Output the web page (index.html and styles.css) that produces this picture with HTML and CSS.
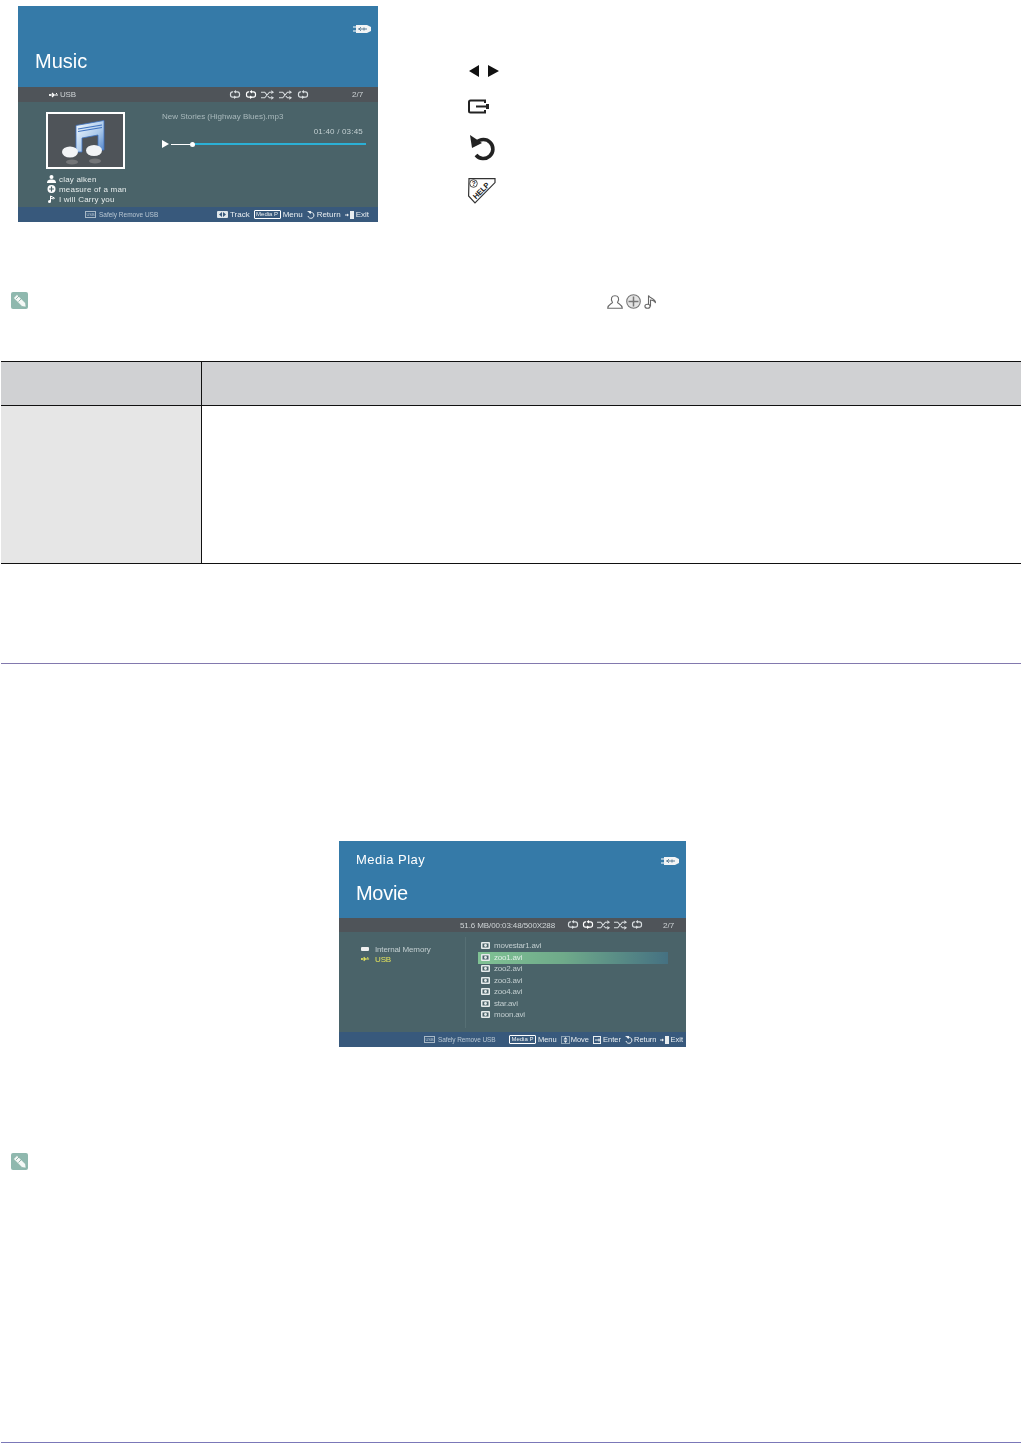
FILE: index.html
```html
<!DOCTYPE html>
<html lang="en">
<head>
<meta charset="utf-8">
<title>Media Play</title>
<link rel="stylesheet" href="styles.css">
</head>
<body>
<svg class="defs" width="0" height="0" aria-hidden="true">
  <symbol id="i-usb" viewBox="0 0 18 8"><path d="M0 1.500h3v1H0zM0 5.500h3v1H0z" fill="#fff"/><path d="M3 0h11l4 2v4l-4 2H3z" fill="#f2f4f5"/><path d="M5 4h9M8 2.200L6 4l2 1.800M11 2.500v3" stroke="#5d7f96" fill="none"/></symbol>
  <symbol id="i-usbsmall" viewBox="0 0 10 6"><path d="M0 3h9M3 1l2 2-2 2M7 1.500h1" stroke="currentColor" stroke-width="1.200" fill="none"/><circle cx="1" cy="3" r="1" fill="currentColor"/></symbol>
  <symbol id="i-repeat" viewBox="0 0 12 10"><path d="M4 1.800H3.500Q1.500 1.800 1.500 4v1q0 2.200 2 2.200h5q2 0 2-2.200V4q0-2.200-2-2.200H6" stroke="currentColor" stroke-width="1.200" fill="none"/><path d="M7 0v3.600L4.500 1.800zM5 5.500v3.600l2.500-1.800z" fill="currentColor"/></symbol>
  <symbol id="i-shuffle" viewBox="0 0 15 10"><path d="M0 2h4l5 6h2M0 8h4l5-6h2" stroke="currentColor" stroke-width="1.100" fill="none"/><path d="M11 0l3 2-3 2zM11 6l3 2-3 2z" fill="currentColor"/></symbol>
  <symbol id="i-file" viewBox="0 0 9 7"><rect width="9" height="7" rx="1" fill="#e6ecec"/><rect x="1.500" y="1.500" width="6" height="4" fill="#4a6369"/><circle cx="4.500" cy="3.500" r="1.400" fill="#e6ecec"/></symbol>
  <symbol id="i-note" viewBox="0 0 17 17"><rect width="17" height="17" rx="2" fill="#8fb8ae"/><path d="M2.500 6L6 2.500l8.500 8.500.5 4-4-.5z" fill="#f4f8f6" stroke="#7aa69b" stroke-width=".5"/><path d="M5 7l3-3M7.500 9.500l3-3" stroke="#7aa69b" stroke-width=".8"/></symbol>
  <symbol id="i-return" viewBox="0 0 8 8"><path d="M2 2a3 3 0 1 1-1 3" stroke="currentColor" stroke-width="1" fill="none"/><path d="M0 0h4v3z" fill="currentColor"/></symbol>
  <symbol id="i-exit" viewBox="0 0 9 8"><path d="M0 4h2" stroke="currentColor"/><path d="M2 2.500L4 4 2 5.500z" fill="currentColor"/><rect x="5" y="0" width="4" height="8" fill="currentColor"/></symbol>
  <symbol id="i-pair" viewBox="0 0 11 7"><rect width="11" height="7" rx="1" fill="#dfe6ea"/><path d="M5 1v5L2 3.500zM6 1v5l3-2.500z" fill="#38597c"/></symbol>
  <symbol id="i-enter" viewBox="0 0 9 8"><rect x=".5" y=".5" width="7" height="7" fill="none" stroke="currentColor"/><path d="M2 4h6M6 2.500v3" stroke="currentColor"/></symbol>
  <symbol id="i-move" viewBox="0 0 9 8"><rect x=".5" y=".5" width="8" height="7" fill="none" stroke="#8da3b5"/><path d="M4.500 1l2 2.500h-4zM4.500 7l2-2.500h-4z" fill="currentColor"/></symbol>
</svg>

<section class="top">
  <div class="screen music">
    <header class="head music-head">
      <svg class="usb-big"><use href="#i-usb"/></svg>
      <h2 class="music-title">Music</h2>
    </header>
    <div class="bar music-bar">
      <svg class="usb-mini"><use href="#i-usbsmall"/></svg>
      <span class="bar-usb">USB</span>
      <span class="bar-icons music-bar-icons">
        <svg class="ic-rep"><use href="#i-repeat"/></svg>
        <svg class="ic-rep strong"><use href="#i-repeat"/></svg>
        <svg class="ic-shuf"><use href="#i-shuffle"/></svg>
        <svg class="ic-shuf"><use href="#i-shuffle"/></svg>
        <svg class="ic-rep"><use href="#i-repeat"/></svg>
      </span>
      <span class="bar-count">2/7</span>
    </div>
    <div class="music-body">
      <div class="music-left">
        <div class="album">
          <svg class="album-art" viewBox="0 0 44 46">
            <defs>
              <linearGradient id="noteg" x1="0" y1="0" x2="1" y2="1"><stop offset="0" stop-color="#f6fbff"/><stop offset=".6" stop-color="#a9c8ea"/><stop offset="1" stop-color="#4f82c8"/></linearGradient>
            </defs>
            <path d="M14 6.500L42 1.500V31h-6V16L20 19v14h-6z" fill="url(#noteg)" stroke="#3f72c0" stroke-width=".8"/>
            <path d="M16 10l24-4M16 12.500l24-4" stroke="#3f72c0" stroke-width="1.200"/>
            <ellipse cx="8" cy="33" rx="8" ry="5.500" fill="#f2f4f6"/>
            <ellipse cx="32" cy="31.500" rx="8" ry="5.500" fill="#f2f4f6"/>
            <ellipse cx="10" cy="43" rx="6" ry="2.500" fill="#737578"/>
            <ellipse cx="33" cy="42" rx="6" ry="2.500" fill="#737578"/>
          </svg>
        </div>
        <ul class="meta">
          <li class="meta-row">
            <svg class="meta-ic" viewBox="0 0 9 8"><circle cx="4.500" cy="2" r="2" fill="#fff"/><path d="M0 8c0-3 2-3.500 4.500-3.500S9 5 9 8z" fill="#fff"/></svg>
            <span>clay alken</span>
          </li>
          <li class="meta-row">
            <svg class="meta-ic" viewBox="0 0 8 8"><circle cx="4" cy="4" r="4" fill="#fff"/><path d="M4 1.500v5M1.500 4h5" stroke="#4a6369" stroke-width="1.200"/></svg>
            <span>measure of a man</span>
          </li>
          <li class="meta-row">
            <svg class="meta-ic" viewBox="0 0 8 8"><path d="M3 1v5.500M3 1l4 2-1 1-3-1" stroke="#fff" fill="none"/><circle cx="2" cy="6.500" r="1.500" fill="#fff"/></svg>
            <span>I will Carry you</span>
          </li>
        </ul>
      </div>
      <div class="music-right">
        <p class="track">New Stories (Highway Blues).mp3</p>
        <p class="time">01:40 / 03:45</p>
        <div class="progress">
          <span class="play"></span>
          <span class="done"></span>
          <span class="knob"></span>
          <span class="rest"></span>
        </div>
      </div>
    </div>
    <footer class="foot music-foot">
      <span class="safe"><i class="usbkey">USB</i>Safely Remove USB</span>
      <span class="foot-right music-keys">
        <span class="key"><svg class="k-pair"><use href="#i-pair"/></svg>Track</span>
        <span class="key"><i class="mediap">Media P</i>Menu</span>
        <span class="key"><svg class="k-ret"><use href="#i-return"/></svg>Return</span>
        <span class="key"><svg class="k-exit"><use href="#i-exit"/></svg>Exit</span>
      </span>
    </footer>
  </div>

  <div class="legend">
    <svg class="lg-arrows" viewBox="0 0 31 12"><path d="M11 0v12L1 6zM20 0v12l11-6z" fill="#111"/></svg>
    <svg class="lg-input" viewBox="0 0 21 15"><path d="M17 4V1.500H2.500Q1 1.500 1 3v9q0 1.500 1.500 1.500H17V11" fill="none" stroke="#222" stroke-width="2"/><path d="M8 7.500h10" stroke="#222" stroke-width="2"/><path d="M19.500 5v5" stroke="#222" stroke-width="3"/></svg>
    <svg class="lg-return" viewBox="0 0 25 27"><path d="M6.500 8.500A9.500 9.500 0 1 1 6 21" fill="none" stroke="#222" stroke-width="3.600"/><path d="M0 1l2 13 10-5z" fill="#222"/></svg>
    <svg class="lg-help" viewBox="0 0 29 26">
      <path d="M1 .6h26v4L7 25 .6 18z" fill="#fff" stroke="#333" stroke-width="1.200"/>
      <circle cx="5.500" cy="5.500" r="3.800" fill="#fff" stroke="#222" stroke-width=".8"/>
      <text class="help-q" x="3.800" y="8">?</text>
      <text class="help-t" text-anchor="middle" transform="translate(15 14.500) rotate(-45)">HELP</text>
    </svg>
  </div>
</section>

<div class="note note-first">
  <svg class="note-ic"><use href="#i-note"/></svg>
  <span class="glyphs">
    <svg class="gl-person" viewBox="0 0 16 14"><path d="M5.500 7.500C3 3 5 .7 8 .7s5 2.300 2.500 6.800c1 1.500 4.500 2 4.800 5.800H.7C1 9.500 4.500 9 5.500 7.500z" fill="#fff" stroke="#6a6a6a" stroke-width="1.100"/></svg>
    <svg class="gl-disc" viewBox="0 0 15 15"><circle cx="7.500" cy="7.500" r="6.800" fill="#e4e4e4" stroke="#777" stroke-width="1.100"/><path d="M7.500 2.500v10M2.500 7.500h10" stroke="#777" stroke-width="1.500"/></svg>
    <svg class="gl-note" viewBox="0 0 13 15"><path d="M4.500 12V1.500c1 3 7.500 3 7 7.500-.5-2-3.500-3-5-3v6.500" fill="#fff" stroke="#666" stroke-width="1.100"/><ellipse cx="3.500" cy="12.200" rx="2.600" ry="2" fill="#fff" stroke="#666" stroke-width="1.100"/></svg>
  </span>
</div>

<table class="info">
  <thead><tr><th class="col-a"></th><th class="col-b"></th></tr></thead>
  <tbody><tr><td class="col-a"></td><td class="col-b"></td></tr></tbody>
</table>

<hr class="rule">

<div class="screen movie">
  <header class="head movie-head">
    <svg class="usb-big"><use href="#i-usb"/></svg>
    <p class="movie-crumb">Media Play</p>
    <h2 class="movie-title">Movie</h2>
  </header>
  <div class="bar movie-bar">
    <span class="bar-info">51.6 MB/00:03:48/500X288</span>
    <span class="bar-icons movie-bar-icons">
      <svg class="ic-rep"><use href="#i-repeat"/></svg>
      <svg class="ic-rep strong"><use href="#i-repeat"/></svg>
      <svg class="ic-shuf"><use href="#i-shuffle"/></svg>
      <svg class="ic-shuf"><use href="#i-shuffle"/></svg>
      <svg class="ic-rep"><use href="#i-repeat"/></svg>
    </span>
    <span class="bar-count">2/7</span>
  </div>
  <div class="movie-body">
    <ul class="sources">
      <li class="src"><span class="src-disk"></span>Internal Memory</li>
      <li class="src src-on"><svg class="src-usb"><use href="#i-usbsmall"/></svg>USB</li>
    </ul>
    <ul class="files">
      <li class="file"><svg class="file-ic"><use href="#i-file"/></svg>movestar1.avi</li>
      <li class="file file-on"><svg class="file-ic"><use href="#i-file"/></svg>zoo1.avi</li>
      <li class="file"><svg class="file-ic"><use href="#i-file"/></svg>zoo2.avi</li>
      <li class="file"><svg class="file-ic"><use href="#i-file"/></svg>zoo3.avi</li>
      <li class="file"><svg class="file-ic"><use href="#i-file"/></svg>zoo4.avi</li>
      <li class="file"><svg class="file-ic"><use href="#i-file"/></svg>star.avi</li>
      <li class="file"><svg class="file-ic"><use href="#i-file"/></svg>moon.avi</li>
    </ul>
  </div>
  <footer class="foot movie-foot">
    <span class="safe movie-safe"><i class="usbkey">USB</i>Safely Remove USB</span>
    <span class="foot-right movie-keys">
      <span class="key"><i class="mediap">Media P</i>Menu</span>
      <span class="key"><svg class="k-move"><use href="#i-move"/></svg>Move</span>
      <span class="key"><svg class="k-enter"><use href="#i-enter"/></svg>Enter</span>
      <span class="key"><svg class="k-ret"><use href="#i-return"/></svg>Return</span>
      <span class="key"><svg class="k-exit"><use href="#i-exit"/></svg>Exit</span>
    </span>
  </footer>
</div>

<div class="note note-last">
  <svg class="note-ic"><use href="#i-note"/></svg>
</div>

<hr class="rule rule-end">
</body>
</html>
```

FILE: styles.css
```css
* { box-sizing: border-box; }
html, body { margin: 0; padding: 0; background: #fff; }
body { font-family: "Liberation Sans", Arial, sans-serif; color: #222; height: 1443px; overflow: hidden; }
ul { list-style: none; margin: 0; padding: 0; }
p, h2 { margin: 0; font-weight: 400; }
i { font-style: normal; }
.defs { position: absolute; }
svg { display: block; flex: none; }

.top { display: flex; padding: 6px 0 0 18px; }

.screen { display: flex; flex-direction: column; color: #fff; filter: blur(.45px); overflow: hidden; font-size: 8px; white-space: nowrap; }
.music { width: 360px; height: 216px; flex: none; }
.movie { width: 347px; height: 206px; margin: 177px 0 0 339px; }

.head { background: #357aa8; position: relative; }
.usb-big { width: 18px; height: 8px; position: absolute; }

.music-head { height: 81px; padding: 44px 0 0 17px; }
.music-head .usb-big { top: 19px; right: 7px; }
.music-title { font-size: 20px; line-height: 23px; }

.movie-head { height: 77px; padding: 11px 0 0 17px; }
.movie-head .usb-big { top: 16px; right: 7px; }
.movie-crumb { font-size: 13px; line-height: 16px; letter-spacing: .5px; }
.movie-title { font-size: 20px; line-height: 24px; margin-top: 13px; letter-spacing: -.3px; }

.bar { background: #4f5459; display: flex; align-items: center; color: #cfd4d6; }
.music-bar { height: 15px; padding-left: 31px; }
.movie-bar { height: 14px; padding-left: 121px; }
.usb-mini { width: 10px; height: 6px; margin-right: 1px; color: #fff; }
.bar-usb { width: 169px; letter-spacing: -.2px; }
.bar-info { width: 107px; letter-spacing: -.1px; }
.bar-icons { display: flex; align-items: center; color: #d8dde0; }
.music-bar-icons { width: 123px; gap: 4px; }
.movie-bar-icons { width: 96px; gap: 3px; }
.ic-rep { width: 12px; height: 10px; }
.ic-shuf { width: 14px; height: 10px; }
.strong { color: #fff; }

.music-body { height: 105px; background: #4a6369; display: flex; }
.music-left { width: 144px; padding: 10px 0 0 28px; }
.album { width: 79px; height: 57px; border: 2px solid #fff; background: #4f5459; display: flex; justify-content: center; padding: 5px 3px 0 0; }
.album-art { width: 44px; height: 46px; }
.meta { margin: 5px 0 0 1px; }
.meta-row { display: flex; align-items: center; height: 10px; gap: 3px; letter-spacing: .2px; color: #e6ecec; }
.meta-ic { width: 9px; height: 8px; }

.music-right { flex: 1; padding: 9px 12px 0 0; color: #a9b9bc; }
.track { line-height: 11px; }
.time { line-height: 11px; margin-top: 4px; text-align: right; padding-right: 3px; letter-spacing: .2px; color: #c2cfd1; }
.progress { display: flex; align-items: center; height: 8px; margin-top: 3px; }
.play { width: 0; height: 0; border-left: 7px solid #fff; border-top: 4px solid transparent; border-bottom: 4px solid transparent; margin-right: 2px; }
.done { width: 19px; height: 1px; background: #fff; }
.knob { width: 5px; height: 5px; border-radius: 50%; background: #fff; }
.rest { flex: 1; height: 2px; background: #2bb0d6; }

.foot { background: #38597c; display: flex; align-items: center; color: #e8edf0; }
.music-foot { height: 15px; padding-left: 67px; }
.movie-foot { height: 15px; padding-left: 85px; }
.safe { display: flex; align-items: center; gap: 2px; font-size: 6.500px; color: #b8c6d2; }
.movie-safe { letter-spacing: -.1px; }
.usbkey { border: 1px solid #a8b8c6; font-size: 4px; line-height: 5px; padding: 0; margin-right: 1px; width: 11px; display: block; text-align: center; }
.foot-right { display: flex; align-items: center; margin-left: auto; }
.music-keys { gap: 4px; padding-right: 9px; }
.movie-keys { gap: 4px; padding-right: 3px; font-size: 7.500px; }
.key { display: flex; align-items: center; gap: 2px; }
.movie-keys .key { gap: 1px; }
.movie-keys .mediap { margin-right: 1px; }
.mediap { border: 1px solid #fff; border-radius: 1px; font-size: 6px; line-height: 7px; padding: 0; display: block; width: 27px; text-align: center; }
.k-pair { width: 11px; height: 7px; }
.k-ret { width: 8px; height: 8px; }
.k-exit { width: 9px; height: 8px; }
.k-move { width: 9px; height: 8px; }
.k-enter { width: 9px; height: 8px; }

.movie-body { height: 100px; background: #4a6369; display: flex; color: #c2ced0; }
.sources { width: 127px; padding: 7px 0 0 22px; border-right: 1px solid #566f74; height: 91px; margin-top: 5px; letter-spacing: -.15px; }
.src { display: flex; align-items: center; height: 10px; gap: 5px; }
.src-on { color: #e2e25c; }
.src-disk { width: 8px; height: 4px; background: #f0f0f0; border-radius: 1px; margin-right: 1px; }
.src-usb { width: 9px; height: 6px; }
.files { flex: 1; padding: 8px 18px 0 12px; letter-spacing: -.2px; }
.file { display: flex; align-items: center; height: 11.500px; padding-left: 3px; gap: 4px; }
.file-ic { width: 9px; height: 7px; }
.file-on { background: linear-gradient(90deg, #80c294 0%, #6faa8a 45%, #457182 100%); color: #dfeee6; height: 12px; margin-bottom: -.5px; }

.note { padding-left: 11px; display: flex; align-items: flex-start; }
.note-ic { width: 17px; height: 17px; }
.note-first { margin-top: 70px; height: 17px; }
.note-last { margin-top: 106px; height: 17px; }
.glyphs { display: flex; align-items: center; gap: 3px; margin: 2px 0 0 579px; }
.gl-person { width: 16px; height: 14px; }
.gl-disc { width: 15px; height: 15px; }
.gl-note { width: 13px; height: 15px; }

.legend { margin-left: 90px; padding-top: 59px; display: flex; flex-direction: column; align-items: flex-start; }
.lg-arrows { width: 31px; height: 12px; }
.lg-input { width: 21px; height: 15px; margin-top: 22px; }
.lg-return { width: 25px; height: 27px; margin: 20px 0 0 2px; }
.lg-help { width: 29px; height: 26px; margin-top: 17px; overflow: visible; }
.help-q { font-size: 6.500px; font-weight: 700; fill: #222; }
.help-t { font-size: 7.500px; font-weight: 700; fill: #222; }

.info { border-collapse: collapse; table-layout: fixed; width: 1020px; margin: 52px 0 0 1px; }
.info th, .info td { padding: 0; border-top: 1px solid #111; border-bottom: 1px solid #111; }
.info .col-a { width: 200px; }
.info .col-b { border-left: 1px solid #111; }
.info th { height: 44px; background: #d0d1d3; }
.info td { height: 158px; }
.info td.col-a { background: #e6e6e6; }

.rule { border: 0; height: 1px; background: #8279ae; margin: 99px 1px 0 1px; }
.rule-end { background: #7b78b8; margin-top: 272px; }
```
